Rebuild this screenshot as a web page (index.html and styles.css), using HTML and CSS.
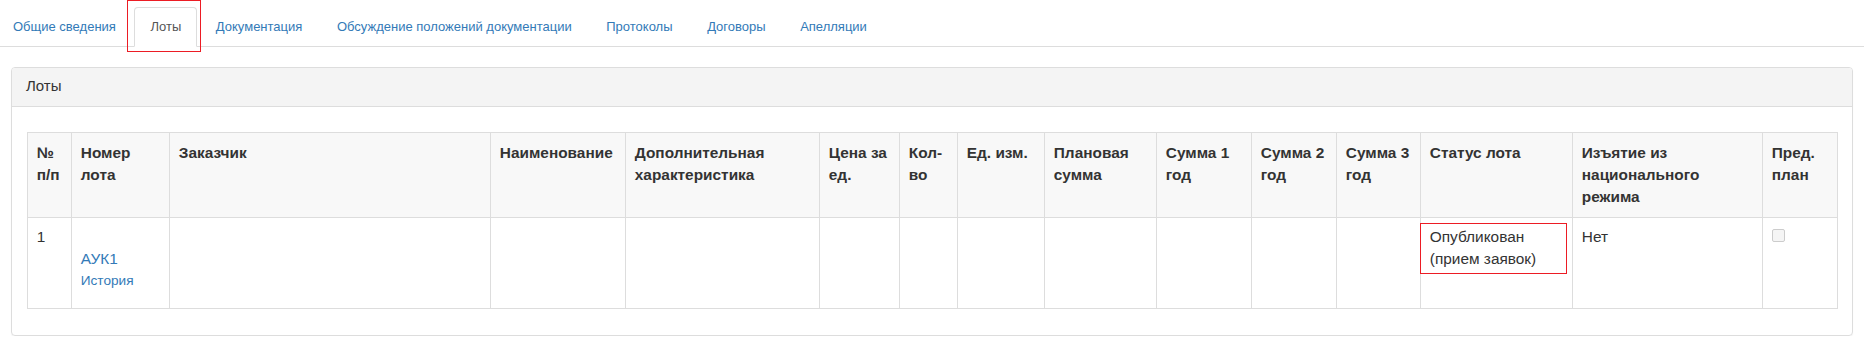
FILE: index.html
```html
<!DOCTYPE html>
<html lang="ru">
<head>
  <meta charset="UTF-8">
  <title>Лоты</title>
  <link rel="stylesheet" href="styles.css">
</head>
<body>
  <ul class="nav-tabs">
    <li><a href="#">Общие сведения</a></li>
    <li class="active"><a href="#">Лоты</a><span class="mark mark-tab"></span></li>
    <li><a href="#">Документация</a></li>
    <li><a href="#">Обсуждение положений документации</a></li>
    <li><a href="#">Протоколы</a></li>
    <li><a href="#">Договоры</a></li>
    <li><a href="#">Апелляции</a></li>
  </ul>

  <div class="panel">
    <div class="panel-heading">Лоты</div>
    <div class="panel-body">
      <table class="lots">
        <colgroup>
          <col class="c-num">
          <col class="c-lot">
          <col class="c-customer">
          <col class="c-name">
          <col class="c-extra">
          <col class="c-price">
          <col class="c-qty">
          <col class="c-unit">
          <col class="c-plan">
          <col class="c-sum1">
          <col class="c-sum2">
          <col class="c-sum3">
          <col class="c-status">
          <col class="c-regime">
          <col class="c-preplan">
        </colgroup>
        <thead>
          <tr>
            <th>№ п/п</th>
            <th>Номер лота</th>
            <th>Заказчик</th>
            <th>Наименование</th>
            <th>Дополнительная характеристика</th>
            <th>Цена за ед.</th>
            <th>Кол-во</th>
            <th>Ед. изм.</th>
            <th>Плановая сумма</th>
            <th>Сумма 1 год</th>
            <th>Сумма 2 год</th>
            <th>Сумма 3 год</th>
            <th>Статус лота</th>
            <th>Изъятие из национального режима</th>
            <th>Пред. план</th>
          </tr>
        </thead>
        <tbody>
          <tr>
            <td>1</td>
            <td>
              <div class="lot-num"><a href="#">АУК1</a></div>
              <div class="lot-hist"><a href="#">История</a></div>
            </td>
            <td></td>
            <td></td>
            <td></td>
            <td></td>
            <td></td>
            <td></td>
            <td></td>
            <td></td>
            <td></td>
            <td></td>
            <td class="status-cell">Опубликован (прием заявок)<span class="mark mark-status"></span></td>
            <td>Нет</td>
            <td><input type="checkbox" class="check" disabled></td>
          </tr>
        </tbody>
      </table>
    </div>
  </div>
</body>
</html>
```

FILE: styles.css
```css
body {
  margin: 0;
  font-family: "Liberation Sans", Arial, sans-serif;
  font-size: 15.4px;
  line-height: 22px;
  color: #333;
  background: #fff;
}

a {
  color: #337ab7;
  text-decoration: none;
}

/* tabs */
.nav-tabs {
  display: flex;
  list-style: none;
  margin: 7px 7px 0 -3px;
  padding: 0;
  border-bottom: 1px solid #ddd;
}

.nav-tabs li {
  position: relative;
  margin-right: 2.6px;
  margin-bottom: -1px;
}

.nav-tabs a {
  display: block;
  padding: 9px 15px;
  font-size: 13px;
  line-height: 20px;
  border: 1px solid transparent;
  border-radius: 4px 4px 0 0;
}

.nav-tabs .active a {
  color: #555;
  background: #fff;
  border-color: #ddd #ddd transparent;
}

/* red marks over the screenshot */
.mark {
  position: absolute;
  box-sizing: border-box;
  border: 1px solid #ec1c24;
  pointer-events: none;
}

.mark-tab { left: -7px; right: -4px; top: -7px; bottom: -5px; }

.mark-status { left: -1px; top: 5px; width: 147px; height: 51px; }

/* panel */
.panel {
  margin: 20px 18px 0 11px;
  border: 1px solid #ddd;
  border-radius: 4px;
  box-shadow: 0 1px 1px rgba(0,0,0,0.05);
}

.panel-heading {
  padding: 7px 14px 9px;
  font-size: 15px;
  line-height: 22px;
  background: #f4f4f4;
  border-bottom: 1px solid #ddd;
  border-radius: 3px 3px 0 0;
}

.panel-body {
  padding: 25px 15px 26px;
}

/* table */
.lots {
  width: 100%;
  table-layout: fixed;
  border-collapse: collapse;
}

.lots th, .lots td {
  padding: 8.8px;
  border: 1px solid #ddd;
  text-align: left;
  vertical-align: top;
}

.lots th {
  background: #f8f8f8;
  font-weight: bold;
}

.c-num { width: 44px; }
.c-lot { width: 98px; }
.c-customer { width: 321px; }
.c-name { width: 135px; }
.c-extra { width: 194px; }
.c-price { width: 80px; }
.c-qty { width: 58px; }
.c-unit { width: 87px; }
.c-plan { width: 112px; }
.c-sum1 { width: 95px; }
.c-sum2 { width: 85px; }
.c-sum3 { width: 84px; }
.c-status { width: 152px; }
.c-regime { width: 190px; }
.c-preplan { width: 75px; }

.lot-num {
  margin-top: 22px;
}

.lot-hist {
  font-size: 13.6px;
  margin-bottom: 7px;
}

.status-cell {
  position: relative;
}

.check {
  display: block;
  appearance: none;
  width: 13px;
  height: 13px;
  margin: 3px 0 0;
  border: 1px solid #ccc;
  border-radius: 2px;
  background: #f5f5f5;
}
```
